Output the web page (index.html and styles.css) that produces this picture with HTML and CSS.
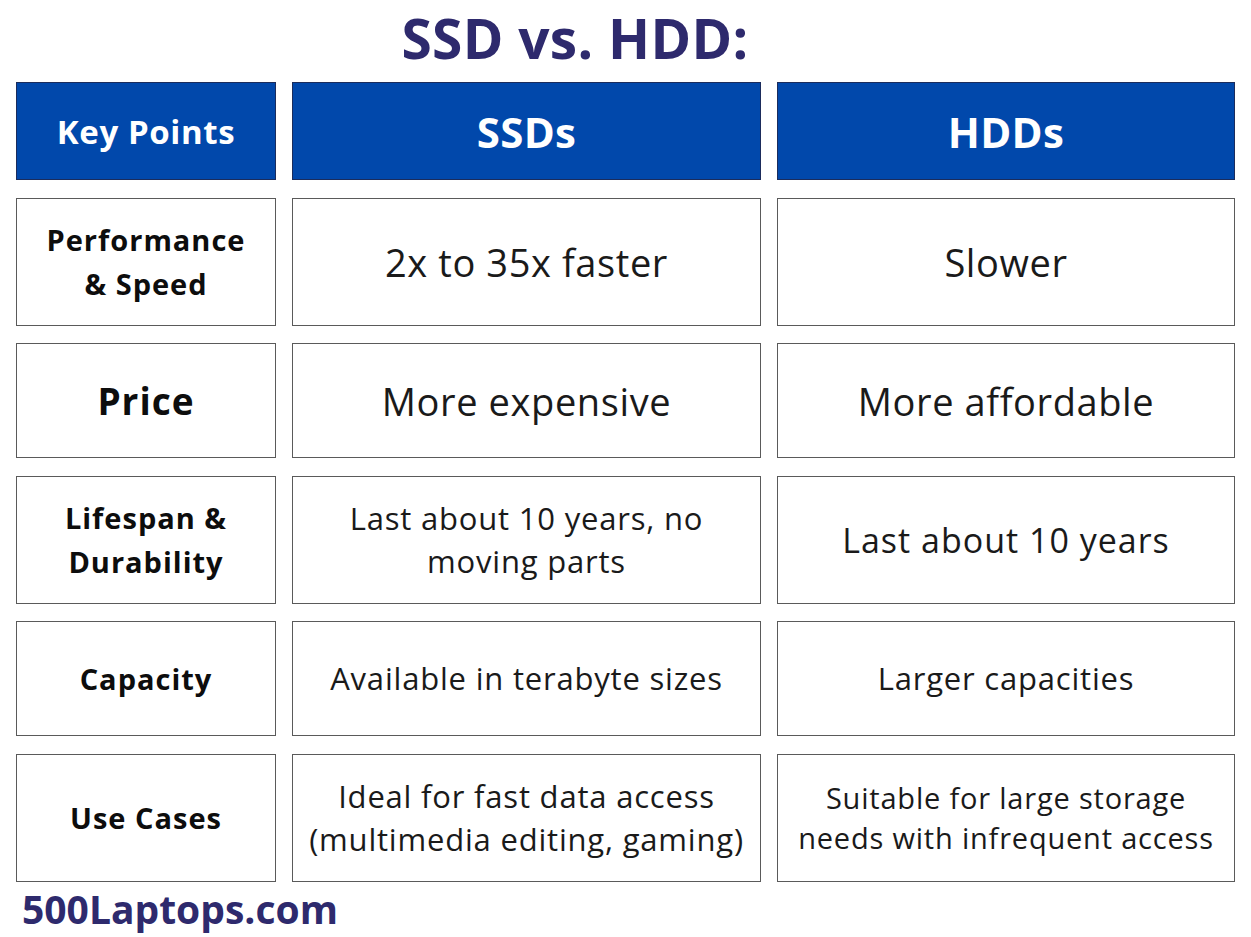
FILE: index.html
```html
<!DOCTYPE html>
<html lang="en">
<head>
<meta charset="utf-8">
<title>SSD vs. HDD</title>
<link rel="stylesheet" href="styles.css">
</head>
<body>
<div class="page">
  <h1 class="title">SSD vs. HDD:</h1>
  <div class="grid">
    <div class="cell head head-key">Key Points</div>
    <div class="cell head head-big">SSDs</div>
    <div class="cell head head-big">HDDs</div>

    <div class="cell key">Performance<br>&amp; Speed</div>
    <div class="cell val val-lg">2x to 35x faster</div>
    <div class="cell val val-lg">Slower</div>

    <div class="cell key key-lg">Price</div>
    <div class="cell val val-lg">More expensive</div>
    <div class="cell val val-lg">More affordable</div>

    <div class="cell key">Lifespan &amp;<br>Durability</div>
    <div class="cell val val-md">Last about 10 years, no<br>moving parts</div>
    <div class="cell val val-ml">Last about 10 years</div>

    <div class="cell key">Capacity</div>
    <div class="cell val val-md">Available in terabyte sizes</div>
    <div class="cell val val-md">Larger capacities</div>

    <div class="cell key">Use Cases</div>
    <div class="cell val val-md">Ideal for fast data access<br>(multimedia editing, gaming)</div>
    <div class="cell val val-sm">Suitable for large storage<br>needs with infrequent access</div>
  </div>
  <div class="brand">500Laptops.com</div>
</div>
</body>
</html>
```

FILE: styles.css
```css
html, body {
  margin: 0;
  padding: 0;
  background: #ffffff;
}
body {
  font-family: "Open Sans", "Noto Sans", sans-serif;
  color: #111111;
}
.page {
  width: 1251px;
  height: 937px;
  box-sizing: border-box;
  padding: 0 0 0 16px;
}
.title {
  margin: 0;
  width: 1118px;
  text-align: center;
  font-size: 55px;
  font-weight: 700;
  color: #2e2a6d;
  line-height: 76px;
  height: 82px;
  letter-spacing: 0.3px;
}
.grid {
  display: grid;
  grid-template-columns: 260px 469px 458px;
  grid-template-rows: 98px 128px 115px 128px 115px 128px;
  column-gap: 16px;
  row-gap: 17.5px;
}
.cell {
  box-sizing: border-box;
  border: 1.5px solid #5a5a5a;
  display: flex;
  align-items: center;
  justify-content: center;
  text-align: center;
}
.head {
  background: #0148ab;
  border-color: #1b2c5c;
  color: #ffffff;
  font-weight: 700;
}
.head-key {
  font-size: 33px;
  letter-spacing: 0.6px;
}
.head-big {
  font-size: 42px;
  letter-spacing: 0.3px;
}
.key {
  font-weight: 700;
  font-size: 29px;
  letter-spacing: 1px;
  line-height: 44px;
  color: #0d0d0d;
}
.key-lg {
  font-size: 37px;
}
.val {
  font-weight: 400;
  color: #1a1a1a;
}
.val-lg {
  font-size: 38px;
  letter-spacing: 0.6px;
}
.val-ml {
  font-size: 34px;
  letter-spacing: 1px;
}
.val-md {
  font-size: 31px;
  letter-spacing: 0.8px;
  line-height: 43px;
}
.val-sm {
  font-size: 29px;
  letter-spacing: 0.8px;
  line-height: 40px;
}
.brand {
  margin-top: 6.5px;
  padding-left: 6px;
  font-size: 39px;
  font-weight: 700;
  color: #2e2a6d;
  line-height: 42px;
}
```
